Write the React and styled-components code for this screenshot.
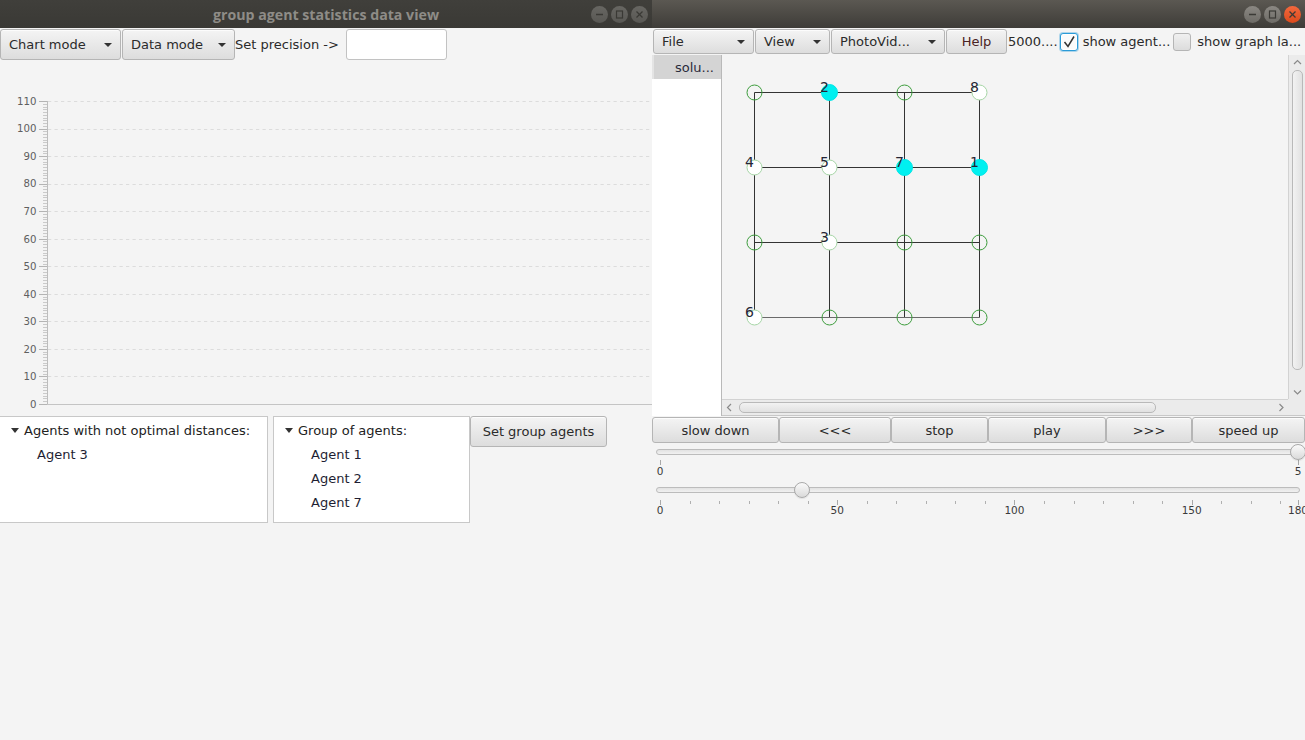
import React from 'react';
import styled, { createGlobalStyle } from 'styled-components';

const Global = createGlobalStyle`
  html, body { margin: 0; padding: 0; background: #f4f4f4; }
  body { font-family: "DejaVu Sans", "Liberation Sans", sans-serif; font-size: 13px; color: #333; overflow: hidden; }
  * { box-sizing: border-box; }
`;

const Desktop = styled.div`
  display: flex;
  width: 1305px;
  height: 740px;
  overflow: hidden;
`;

const Window = styled.div`
  display: flex;
  flex-direction: column;
  flex: none;
  width: ${p => p.$w}px;
  height: 740px;
  background: #f4f4f4;
  overflow: hidden;
`;

const TitleBar = styled.div`
  flex: none;
  height: 28px;
  display: grid;
  grid-template-columns: 1fr auto 1fr;
  align-items: center;
  background: ${p => (p.$focused ? 'linear-gradient(#5b5852, #3e3c38)' : 'linear-gradient(#403f3b, #3a3935)')};
`;

const Title = styled.span`
  grid-column: 2;
  font-family: "Open Sans", "DejaVu Sans", sans-serif;
  font-weight: 700;
  font-size: 14.2px;
  color: #8e8c87;
  white-space: nowrap;
`;

const WinButtons = styled.div`
  grid-column: 3;
  justify-self: end;
  display: flex;
  gap: 3px;
  padding-right: 4px;
`;

const WinBtn = styled.span`
  width: 17px;
  height: 17px;
  border-radius: 50%;
  display: flex;
  align-items: center;
  justify-content: center;
  background: ${p =>
    p.$close
      ? 'linear-gradient(#f2683d, #dc4a1c)'
      : p.$focused
      ? 'linear-gradient(#8b8883, #6d6b66)'
      : 'linear-gradient(#676662, #595854)'};
`;

function WindowButtons({ focused }) {
  const s = focused ? '#3b3a36' : '#3a3935';
  return (
    <WinButtons>
      <WinBtn $focused={focused}>
        <svg width="17" height="17"><line x1="5" y1="8.5" x2="12" y2="8.5" stroke={s} strokeWidth="1.5" /></svg>
      </WinBtn>
      <WinBtn $focused={focused}>
        <svg width="17" height="17"><rect x="5.5" y="5" width="6" height="7" fill="none" stroke={s} strokeWidth="1.2" /></svg>
      </WinBtn>
      <WinBtn $focused={focused} $close={focused}>
        <svg width="17" height="17">
          <line x1="5.5" y1="5.5" x2="11.5" y2="11.5" stroke={s} strokeWidth="1.3" />
          <line x1="11.5" y1="5.5" x2="5.5" y2="11.5" stroke={s} strokeWidth="1.3" />
        </svg>
      </WinBtn>
    </WinButtons>
  );
}

/* ---------- shared controls ---------- */

const Button = styled.div`
  flex: none;
  display: flex;
  align-items: center;
  justify-content: ${p => (p.$combo ? 'space-between' : 'center')};
  width: ${p => p.$w}px;
  height: ${p => p.$h || 25}px;
  margin-left: ${p => p.$ml || 0}px;
  padding: 0 ${p => (p.$combo ? 8 : 4)}px 0 ${p => (p.$combo ? p.$pl || 8 : 4)}px;
  border: 1px solid #b5b5b5;
  border-radius: 3px;
  background: linear-gradient(#f4f4f4, #dddddd);
  box-shadow: inset 0 1px 0 rgba(255, 255, 255, 0.7);
  color: ${p => p.$color || '#2b2b2b'};
  white-space: nowrap;
`;

const ComboArrow = styled.span`
  width: 0;
  height: 0;
  border-left: 4px solid transparent;
  border-right: 4px solid transparent;
  border-top: 4px solid #333;
`;

/* ---------- left window ---------- */

const Toolbar = styled.div`
  flex: none;
  display: flex;
  align-items: center;
  height: 32px;
  padding-top: 1px;
`;

const ToolLabel = styled.span`
  color: #2b2b2b;
  white-space: nowrap;
`;

const TextField = styled.div`
  margin-left: 7px;
  width: 101px;
  height: 31px;
  background: #fff;
  border: 1px solid #c2c2c2;
  border-radius: 3px;
`;

const ChartBox = styled.div`
  flex: none;
  height: 350px;
`;

function Chart() {
  const top = 41;
  const bottom = 344;
  const step = (bottom - top) / 110;
  const y = v => top + (110 - v) * step;
  const majors = [];
  for (let v = 110; v >= 0; v -= 10) majors.push(v);
  const minors = [];
  for (let v = 0; v <= 110; v++) if (v % 10) minors.push(v);
  return (
    <svg width="652" height="350">
      {majors.filter(v => v > 0).map(v => (
        <line key={'g' + v} x1="48" x2="652" y1={Math.round(y(v)) + 0.5} y2={Math.round(y(v)) + 0.5}
          stroke="#dcdcdc" strokeDasharray="3.25 3.25" />
      ))}
      {minors.map(v => (
        <line key={'m' + v} x1="43" x2="47" y1={Math.round(y(v)) + 0.5} y2={Math.round(y(v)) + 0.5} stroke="#cacaca" />
      ))}
      {majors.map(v => (
        <line key={'t' + v} x1="39" x2="47" y1={Math.round(y(v)) + 0.5} y2={Math.round(y(v)) + 0.5} stroke="#b4b4b4" />
      ))}
      {majors.map(v => (
        <text key={'l' + v} x="36.5" y={y(v) + 3.8} textAnchor="end" fontSize="10.2"
          fontFamily="DejaVu Sans, sans-serif" fill="#5f5f5f">{v}</text>
      ))}
      <line x1="47.5" x2="47.5" y1={top} y2={bottom + 0.5} stroke="#bdbdbd" />
      <line x1="47" x2="652" y1={bottom + 0.5} y2={bottom + 0.5} stroke="#c4c4c4" />
    </svg>
  );
}

const BottomRow = styled.div`
  flex: none;
  display: flex;
  align-items: flex-start;
  margin-top: 6px;
`;

const Tree = styled.div`
  flex: none;
  width: ${p => p.$w}px;
  height: 107px;
  margin-left: ${p => p.$ml || 0}px;
  background: #fff;
  border: 1px solid #c8c8c8;
  padding-top: 1px;
`;

const TreeRow = styled.div`
  display: flex;
  align-items: center;
  gap: 5px;
  height: 24px;
  padding-left: ${p => (p.$child ? 37 : 11)}px;
  color: ${p => (p.$child ? '#1e1e33' : '#222')};
  white-space: nowrap;
`;

const TreeArrow = styled.span`
  width: 0;
  height: 0;
  border-left: 4px solid transparent;
  border-right: 4px solid transparent;
  border-top: 5px solid #333;
`;

/* ---------- right window ---------- */

const MenuRow = styled.div`
  flex: none;
  display: flex;
  align-items: center;
  gap: 1px;
  height: 27px;
  padding-left: 1px;
`;

const MenuLabel = styled.span`
  flex: none;
  margin-left: ${p => p.$ml || 0}px;
  color: #2b2b2b;
  white-space: nowrap;
`;

const CheckBox = styled.span`
  flex: none;
  width: 18px;
  height: 18px;
  margin-left: ${p => p.$ml || 0}px;
  display: flex;
  align-items: center;
  justify-content: center;
  border-radius: 3px;
  border: 1px solid ${p => (p.$focused ? '#2b9bd8' : '#b5b5b5')};
  background: ${p => (p.$focused ? '#fbfbfb' : 'linear-gradient(#f0f0f0, #dcdcdc)')};
  box-shadow: ${p => (p.$focused ? '0 0 0 1px rgba(43,155,216,0.35), inset 0 0 0 1px #fff' : 'none')};
`;

const Middle = styled.div`
  flex: none;
  display: flex;
  height: 361px;
`;

const SideList = styled.div`
  flex: none;
  width: 70px;
  display: flex;
  flex-direction: column;
  background: #fff;
  border-right: 1px solid #b9b9b9;
`;

const ListHeader = styled.div`
  flex: none;
  height: 24px;
  display: flex;
  align-items: center;
  padding-left: 21px;
  background: #d4d4d4;
  border-left: 2px solid #e4e4e4;
  color: #2b2b3b;
  white-space: nowrap;
`;

const ScrollPane = styled.div`
  flex: 1;
  display: flex;
  flex-direction: column;
  min-width: 0;
`;

const ScrollMain = styled.div`
  flex: 1;
  display: flex;
  min-height: 0;
`;

const Viewport = styled.div`
  flex: 1;
  background: #f4f4f4;
  overflow: hidden;
`;

const VScroll = styled.div`
  flex: none;
  width: 17px;
  display: flex;
  flex-direction: column;
  align-items: center;
  background: #ebebeb;
  border-left: 1px solid #d2d2d2;
`;

const HScrollRow = styled.div`
  flex: none;
  display: flex;
  height: 17px;
`;

const HScroll = styled.div`
  flex: 1;
  display: flex;
  align-items: center;
  background: #ebebeb;
  border-top: 1px solid #d2d2d2;
  border-bottom: 1px solid #c8c8c8;
`;

const Corner = styled.div`
  flex: none;
  width: 17px;
  background: #ebebeb;
  border-bottom: 1px solid #c8c8c8;
`;

const ArrowCell = styled.span`
  flex: none;
  display: flex;
  align-items: center;
  justify-content: center;
  width: ${p => (p.$v ? 16 : 14)}px;
  height: ${p => (p.$v ? 14 : 16)}px;
`;

const Thumb = styled.span`
  flex: none;
  border: 1px solid #b9b9b9;
  border-radius: 5px;
  background: linear-gradient(${p => (p.$v ? 'to right' : 'to bottom')}, #f2f2f2, #e1e1e1);
  width: ${p => (p.$v ? '11px' : p.$len + 'px')};
  height: ${p => (p.$v ? p.$len + 'px' : '11px')};
  margin: ${p => (p.$v ? '1px 0 0 0' : '0 0 0 3px')};
`;

const Spacer = styled.span`flex: 1;`;

const Chevron = ({ dir }) => {
  const pts = {
    up: '1,5 4.5,1.5 8,5',
    down: '1,1.5 4.5,5 8,1.5',
    left: '5,1 1.5,4.5 5,8',
    right: '1.5,1 5,4.5 1.5,8',
  }[dir];
  const w = dir === 'up' || dir === 'down' ? 9 : 7;
  const h = dir === 'up' || dir === 'down' ? 7 : 9;
  return (
    <svg width={w} height={h}><polyline points={pts} fill="none" stroke="#8a8a8a" strokeWidth="1.2" /></svg>
  );
};

const nodes = [
  { c: 0, r: 0, t: 'g' }, { c: 1, r: 0, t: 'c', l: '2' }, { c: 2, r: 0, t: 'g' }, { c: 3, r: 0, t: 'w', l: '8' },
  { c: 0, r: 1, t: 'w', l: '4' }, { c: 1, r: 1, t: 'w', l: '5' }, { c: 2, r: 1, t: 'c', l: '7' }, { c: 3, r: 1, t: 'c', l: '1' },
  { c: 0, r: 2, t: 'g' }, { c: 1, r: 2, t: 'w', l: '3' }, { c: 2, r: 2, t: 'g' }, { c: 3, r: 2, t: 'g' },
  { c: 0, r: 3, t: 'w', l: '6' }, { c: 1, r: 3, t: 'g' }, { c: 2, r: 3, t: 'g' }, { c: 3, r: 3, t: 'g' },
];

function Graph() {
  const X = c => 32.5 + c * 75;
  const Y = r => 37.5 + r * 75;
  const lines = [];
  for (let i = 0; i < 4; i++) {
    lines.push(<line key={'h' + i} x1={X(0)} x2={X(3)} y1={Y(i)} y2={Y(i)} stroke={i === 3 ? '#6a6a6a' : '#333'} />);
    lines.push(<line key={'v' + i} x1={X(i)} x2={X(i)} y1={Y(0)} y2={Y(3)} stroke="#333" />);
  }
  return (
    <svg width="300" height="300" style={{ display: 'block' }}>
      {lines}
      {nodes.map((n, i) => (
        <circle key={'n' + i} cx={X(n.c)} cy={Y(n.r)} r={n.t === 'c' ? 8 : 7.5}
          fill={n.t === 'c' ? '#00f0f0' : n.t === 'w' ? '#ffffff' : 'none'}
          stroke={n.t === 'c' ? '#00e6e6' : n.t === 'w' ? '#a6d6a6' : '#3d9d3d'} strokeWidth="1" />
      ))}
      {nodes.filter(n => n.l).map((n, i) => (
        <text key={'t' + i} x={X(n.c) - 9.5} y={Y(n.r) - 0.5} fontSize="14"
          fontFamily="DejaVu Sans, sans-serif" fill="#252535">{n.l}</text>
      ))}
    </svg>
  );
}

const ButtonRow = styled.div`
  flex: none;
  display: flex;
  margin-top: 1px;
`;

const SliderBlock = styled.div`
  flex: none;
  display: flex;
  flex-direction: column;
  margin-top: ${p => p.$mt}px;
`;

const SliderTrackWrap = styled.div`
  position: relative;
  height: 16px;
  padding: 5px 5px 0 4px;
`;

const SliderTrack = styled.div`
  height: 6px;
  border-radius: 3px;
  border: 1px solid #bcbcbc;
  background: linear-gradient(#e2e2e2, #f1f1f1);
`;

const SliderThumb = styled.span`
  position: absolute;
  top: 0;
  width: 16px;
  height: 16px;
  border-radius: 50%;
  border: 1px solid #a9a9a9;
  background: linear-gradient(#fafafa, #dadada);
  box-shadow: 0 1px 1px rgba(0, 0, 0, 0.08);
`;

function Slider({ value, max, majors, minorStep, mt, tickTop, labelDy }) {
  const pos = v => 8 + (638 * v) / max;
  const minors = [];
  if (minorStep) for (let v = 0; v <= max + 0.001; v += minorStep) minors.push(v);
  return (
    <SliderBlock $mt={mt}>
      <SliderTrackWrap>
        <SliderTrack />
        <SliderThumb style={{ left: pos(value) - 8 }} />
      </SliderTrackWrap>
      <svg width="653" height="21" style={{ display: 'block' }}>
        {minors.map((v, i) => (
          <line key={'m' + i} x1={Math.round(pos(v)) + 0.5} x2={Math.round(pos(v)) + 0.5} y1={tickTop + 1} y2={tickTop + 4} stroke="#b0b0b0" />
        ))}
        {majors.map(v => (
          <line key={'M' + v} x1={Math.round(pos(v)) + 0.5} x2={Math.round(pos(v)) + 0.5} y1={tickTop} y2={tickTop + 5} stroke="#a8a8a8" />
        ))}
        {majors.map(v => (
          <text key={'l' + v} x={pos(v)} y={tickTop + labelDy} textAnchor="middle" fontSize="10.5"
            fontFamily="DejaVu Sans, sans-serif" fill="#3a3a3a">{v}</text>
        ))}
      </svg>
    </SliderBlock>
  );
}

export default function App() {
  return (
    <>
      <Global />
      <Desktop>
        <Window $w={652}>
          <TitleBar>
            <Title>group agent statistics data view</Title>
            <WindowButtons focused={false} />
          </TitleBar>
          <Toolbar>
            <Button $combo $w={121} $h={31}>Chart mode<ComboArrow /></Button>
            <Button $combo $w={113} $h={31} $ml={1}>Data mode<ComboArrow /></Button>
            <ToolLabel>Set precision -&gt;</ToolLabel>
            <TextField />
          </Toolbar>
          <ChartBox><Chart /></ChartBox>
          <BottomRow>
            <Tree $w={269} $ml={-1}>
              <TreeRow><TreeArrow />Agents with not optimal distances:</TreeRow>
              <TreeRow $child>Agent 3</TreeRow>
            </Tree>
            <Tree $w={197} $ml={5}>
              <TreeRow><TreeArrow />Group of agents:</TreeRow>
              <TreeRow $child>Agent 1</TreeRow>
              <TreeRow $child>Agent 2</TreeRow>
              <TreeRow $child>Agent 7</TreeRow>
            </Tree>
            <Button $w={137} $h={31}>Set group agents</Button>
          </BottomRow>
        </Window>

        <Window $w={653}>
          <TitleBar $focused>
            <span />
            <WindowButtons focused />
          </TitleBar>
          <MenuRow>
            <Button $combo $pl={8} $w={101}>File<ComboArrow /></Button>
            <Button $combo $pl={8} $w={75}>View<ComboArrow /></Button>
            <Button $combo $pl={8} $w={114}>PhotoVid...<ComboArrow /></Button>
            <Button $w={61} $color="#4a2323">Help</Button>
            <MenuLabel>5000....</MenuLabel>
            <CheckBox $focused $ml={1}>
              <svg width="14" height="14"><polyline points="2.5,7 6,11.5 12,1.5" fill="none" stroke="#333" strokeWidth="1.5" /></svg>
            </CheckBox>
            <MenuLabel $ml={4}>show agent...</MenuLabel>
            <CheckBox $ml={2} />
            <MenuLabel $ml={5}>show graph la...</MenuLabel>
          </MenuRow>
          <Middle>
            <SideList>
              <ListHeader>solu...</ListHeader>
            </SideList>
            <ScrollPane>
              <ScrollMain>
                <Viewport><Graph /></Viewport>
                <VScroll>
                  <ArrowCell $v><Chevron dir="up" /></ArrowCell>
                  <Thumb $v $len={300} />
                  <Spacer />
                  <ArrowCell $v><Chevron dir="down" /></ArrowCell>
                </VScroll>
              </ScrollMain>
              <HScrollRow>
                <HScroll>
                  <ArrowCell><Chevron dir="left" /></ArrowCell>
                  <Thumb $len={417} />
                  <Spacer />
                  <ArrowCell><Chevron dir="right" /></ArrowCell>
                </HScroll>
                <Corner />
              </HScrollRow>
            </ScrollPane>
          </Middle>
          <ButtonRow>
            <Button $w={127} $h={26}>slow down</Button>
            <Button $w={112} $h={26}>&lt;&lt;&lt;</Button>
            <Button $w={97} $h={26}>stop</Button>
            <Button $w={118} $h={26}>play</Button>
            <Button $w={86} $h={26}>&gt;&gt;&gt;</Button>
            <Button $w={113} $h={26}>speed up</Button>
          </ButtonRow>
          <Slider value={5} max={5} majors={[0, 5]} mt={1} tickTop={0} labelDy={15} />
          <Slider value={40} max={180} majors={[0, 50, 100, 150, 180]} minorStep={50 / 6} mt={1} tickTop={2} labelDy={14} />
        </Window>
      </Desktop>
    </>
  );
}
